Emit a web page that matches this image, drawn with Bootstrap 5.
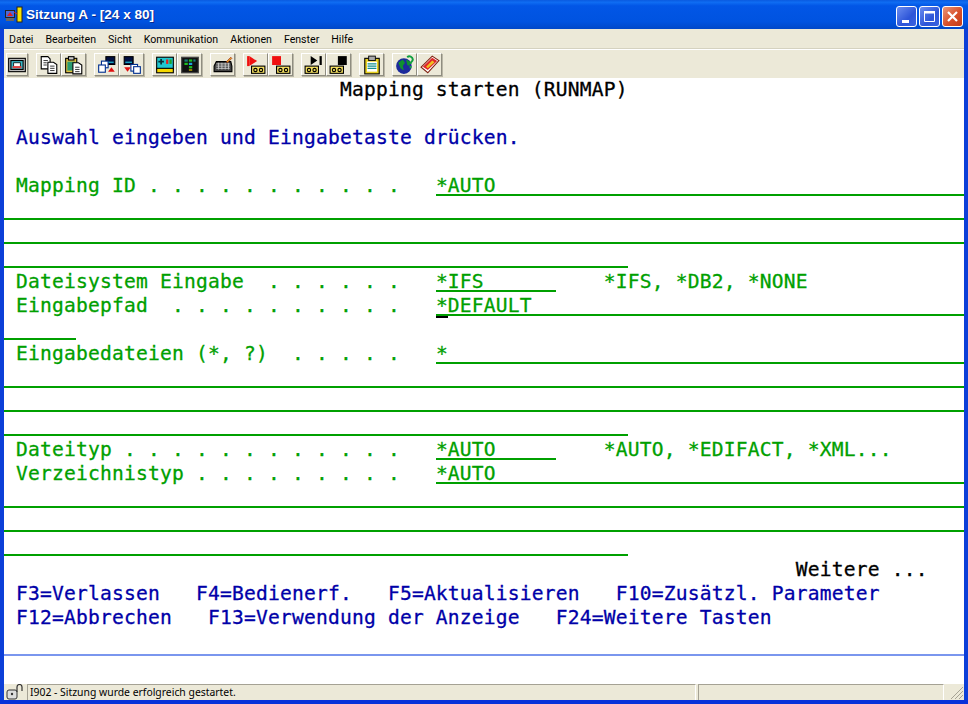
<!DOCTYPE html>
<html lang="de">
<head>
<meta charset="utf-8">
<title>Sitzung A - [24 x 80]</title>
<link href="https://cdn.jsdelivr.net/npm/bootstrap@5.3.0/dist/css/bootstrap.min.css" rel="stylesheet">
<style>
html,body{margin:0;height:704px;overflow:hidden;background:#ece9d8}
.xp-win{width:968px;height:704px;background:#0831d9;border-bottom:4px solid #0831d9;background-clip:padding-box}
.xp-title{height:29px;background:linear-gradient(180deg,#0a5ae0 0,#0f6df2 8%,#0256e6 20%,#0053e0 75%,#0048c8 100%);padding:0 5px 0 5px;color:#fff;font:700 13.600px/1 "Liberation Sans",sans-serif}
.xp-title .ttl{text-shadow:1px 1px 0 #0a2a90;margin-left:3px;margin-top:1px}
.tctl{gap:2px;align-self:flex-end;margin-bottom:2px}
.tbtn{width:21px;height:21px;border:1px solid #fff;border-radius:3px;background:linear-gradient(135deg,#6b8df0,#2d55d8 60%,#3a63e0);display:block}
.tbtn.cl{background:linear-gradient(135deg,#e9967a,#d8502a 55%,#c33c18)}
.xp-frame{flex:1;min-height:0;border-left:4px solid #0c3fd8;border-right:4px solid #0c3fd8;background:#ece9d8}
.xp-menu{height:21px;padding:1px 0 0 5px;background:#ece9d8;border-bottom:1px solid #fff;box-shadow:inset 0 -1px 0 #d5d2c0;font:10.600px/19px Roboto,sans-serif;color:#000}
.xp-menu span{margin-right:12px}
.xp-tools{height:28px;padding:3px 0 0 2px;background:#ece9d8}
.tool{width:25px;height:23px;background:#ece9d8;border:1px solid;border-color:#fff #8f8d80 #8f8d80 #fff;box-shadow:1px 1px 0 #b9b6a6;padding:0;flex:none}
.tool.first{width:22px}
.tool svg{display:block;width:20px;height:20px;margin:0 auto}
.tool-gap{width:8px;flex:none}
.term{height:606px;background:#fff;font:19.6px/24px "DejaVu Sans Mono",monospace;letter-spacing:.2px;position:relative}
.trow{height:24px;white-space:pre;color:#00a000;font-family:"DejaVu Sans Mono",monospace;overflow:hidden;-webkit-text-stroke:.3px currentColor}
.uln{display:inline-block;height:22px;border-bottom:2px solid #00a000;line-height:24px;vertical-align:top}
.c-bk{color:#000}.c-nv{color:#0000a8}
.cursor{position:absolute;left:432px;top:238px;width:12px;height:2px;background:#000}
.sep{height:2px;background:#7a96ee}
.xp-status{height:16px;background:#ece9d8;font:10.400px/15px "Noto Sans",sans-serif;color:#000}
.st-lock{width:23px;flex:none}
.st-msg{width:669px;flex:none;border-left:1px solid #a5a294;border-top:1px solid #a5a294;padding-left:2px;border-right:1px solid #fff}
.st-a{width:2px;flex:none}
.st-b{flex:1;border-top:1px solid #a5a294;border-left:1px solid #a5a294;border-right:1px solid #fff}
.st-c{width:20px;flex:none;overflow:hidden}
</style>
</head>
<body>
<div class="xp-win d-flex flex-column">
  <div class="xp-title d-flex align-items-center">
    <svg width="18" height="18" viewBox="0 0 18 18"><rect x="0" y="4" width="10" height="8" fill="#222"/><rect x="1" y="5" width="8" height="6" fill="#4a6ad8"/><path d="M2 10l3-4 3 4z" fill="#e02020"/><rect x="1" y="12" width="8" height="3" fill="#666"/><rect x="12" y="1" width="5" height="15" fill="#f5e400" stroke="#222"/><path d="M9 6l3 2" stroke="#e02020"/></svg>
    <span class="ttl">Sitzung A - [24 x 80]</span>
    <span class="ms-auto d-flex tctl">
      <span class="tbtn"><svg width="19" height="19" viewBox="0 0 19 19"><rect x="5" y="13" width="7" height="3" fill="#fff"/></svg></span>
      <span class="tbtn"><svg width="19" height="19" viewBox="0 0 19 19"><path d="M4.500 4.500h10v10h-10z" fill="none" stroke="#fff"/><rect x="4" y="4" width="11" height="2.500" fill="#fff"/></svg></span>
      <span class="tbtn cl"><svg width="19" height="19" viewBox="0 0 19 19"><path d="M5 5l9 9M14 5l-9 9" stroke="#fff" stroke-width="2.200"/></svg></span>
    </span>
  </div>
  <div class="xp-frame d-flex flex-column">
    <div class="xp-menu d-flex"><span>Datei</span><span>Bearbeiten</span><span>Sicht</span><span>Kommunikation</span><span>Aktionen</span><span>Fenster</span><span>Hilfe</span></div>
    <div class="xp-tools d-flex">
      <button class="tool first"><svg viewBox="0 0 18 18"><rect x="1.500" y="3" width="15" height="12" fill="#bbb" stroke="#000"/><rect x="3.500" y="5" width="11" height="8" fill="#3ab8c8" stroke="#000"/><rect x="6" y="7" width="6" height="4" fill="#fff" stroke="#000" stroke-width=".7"/><rect x="5" y="10" width="8" height="2" fill="#e04040"/></svg></button>
      <span class="tool-gap"></span>
      <button class="tool"><svg viewBox="0 0 18 18"><path d="M2 1.500h6l2 2v9H2z" fill="#fff" stroke="#000"/><path d="M8 6.500h5l3 2v8H8z" fill="#fff" stroke="#000"/><path d="M4 5h4M4 7h3M4 9h3M10 10h4M10 12h4M10 14h4" stroke="#000" stroke-width=".7"/></svg></button>
      <button class="tool"><svg viewBox="0 0 18 18"><rect x="1.500" y="3" width="10" height="13" fill="#e0c040" stroke="#000"/><rect x="4" y="1.500" width="5" height="3" fill="#ccc" stroke="#000"/><rect x="3" y="6" width="7" height="8" fill="#2a9a70"/><path d="M8 7h5l3 2v8H8z" fill="#fff" stroke="#000"/><path d="M10 11h4M10 13h4M10 15h4" stroke="#000" stroke-width=".7"/></svg></button>
      <span class="tool-gap"></span>
      <button class="tool"><svg viewBox="0 0 18 18"><rect x="8" y="1.500" width="8" height="7" fill="#000f40" stroke="#000"/><rect x="9" y="6" width="6" height="1" fill="#22d0e0"/><rect x="4" y="5.500" width="6" height="6" fill="#fff" stroke="#003090"/><rect x="1.500" y="9" width="6" height="6.500" fill="#fff" stroke="#003090"/><path d="M13 11l3 4h-6z" fill="#e01010"/></svg></button>
      <button class="tool"><svg viewBox="0 0 18 18"><rect x="2" y="1.500" width="8" height="7" fill="#000f40" stroke="#000"/><rect x="3" y="6" width="6" height="1" fill="#22d0e0"/><rect x="8" y="8.500" width="6" height="6" fill="#fff" stroke="#003090"/><rect x="10.500" y="10.500" width="6" height="6" fill="#fff" stroke="#003090"/><path d="M2 11h6l-3 4z" fill="#e01010"/></svg></button>
      <span class="tool-gap"></span>
      <button class="tool"><svg viewBox="0 0 18 18"><rect x="1.500" y="2" width="15" height="11" fill="#20c8d0" stroke="#000"/><path d="M3 6h5M5.500 3.500v5" stroke="#083038" stroke-width="1.500"/><rect x="10" y="4" width="2" height="4" fill="#e02020"/><rect x="13" y="4" width="2" height="4" fill="#20a020"/><rect x="1.500" y="12" width="15" height="4" fill="#f5d800" stroke="#000"/></svg></button>
      <button class="tool"><svg viewBox="0 0 18 18"><rect x="1.500" y="2" width="15" height="14" fill="#111" stroke="#444"/><rect x="4" y="4" width="3" height="2" fill="#1a7a7a"/><rect x="8" y="4" width="3" height="2" fill="#20c020"/><rect x="12" y="4" width="2" height="2" fill="#1a7a7a"/><rect x="4" y="7" width="3" height="2" fill="#20c020"/><rect x="8" y="7" width="3" height="2" fill="#20a0e0"/><rect x="8" y="10" width="3" height="2" fill="#20c020"/><rect x="8" y="13" width="3" height="1" fill="#f0d000"/></svg></button>
      <span class="tool-gap"></span>
      <button class="tool"><svg viewBox="0 0 18 18"><path d="M1 10l2-4h13l1 4v5H1z" fill="#444" stroke="#000"/><path d="M3 8h12M3 10h12M3 12h12M5 7v6M8 7v6M11 7v6M14 7v6" stroke="#ccc" stroke-width=".8"/><path d="M12 6l4-4 1 1-4 4z" fill="#e0a020" stroke="#a02010" stroke-width=".6"/></svg></button>
      <span class="tool-gap"></span>
      <button class="tool"><svg viewBox="0 0 18 18"><path d="M3 1v9l7-4.500z" fill="#f01010"/><rect x="1" y="1" width="2" height="9" fill="#f01010"/><rect x="5" y="10" width="12" height="6.500" fill="#f5e060" stroke="#000"/><circle cx="8.500" cy="13.500" r="1.500" fill="none" stroke="#000"/><circle cx="13.500" cy="13.500" r="1.500" fill="none" stroke="#000"/></svg></button>
      <button class="tool"><svg viewBox="0 0 18 18"><rect x="1" y="1" width="8" height="8" fill="#f01010"/><rect x="5" y="10" width="12" height="6.500" fill="#f5e060" stroke="#000"/><circle cx="8.500" cy="13.500" r="1.500" fill="none" stroke="#000"/><circle cx="13.500" cy="13.500" r="1.500" fill="none" stroke="#000"/></svg></button>
      <span class="tool-gap"></span>
      <button class="tool"><svg viewBox="0 0 18 18"><path d="M6 1v8l6-4z" fill="#000"/><rect x="14" y="1" width="2" height="8" fill="#000"/><rect x="1" y="10" width="12" height="6.500" fill="#f5e060" stroke="#000"/><circle cx="4.500" cy="13.500" r="1.500" fill="none" stroke="#000"/><circle cx="9.500" cy="13.500" r="1.500" fill="none" stroke="#000"/></svg></button>
      <button class="tool"><svg viewBox="0 0 18 18"><rect x="8" y="1" width="8" height="8" fill="#000"/><rect x="1" y="10" width="12" height="6.500" fill="#f5e060" stroke="#000"/><circle cx="4.500" cy="13.500" r="1.500" fill="none" stroke="#000"/><circle cx="9.500" cy="13.500" r="1.500" fill="none" stroke="#000"/></svg></button>
      <span class="tool-gap"></span>
      <button class="tool"><svg viewBox="0 0 18 18"><rect x="2.500" y="3" width="13" height="14" fill="#e8d020" stroke="#000"/><rect x="6" y="1" width="6" height="4" fill="#aaa" stroke="#000" stroke-width=".8"/><rect x="4.500" y="6" width="9" height="9" fill="#fff"/><path d="M5 8h8M5 10h8M5 12h8" stroke="#109090"/></svg></button>
      <span class="tool-gap"></span>
      <button class="tool"><svg viewBox="0 0 18 18"><circle cx="8" cy="10" r="7" fill="#1c2a9c"/><path d="M3 7l4-3 2 3-2 3 1 4-3-2zM10 4l4 2-1 4-2-1z" fill="#109030"/><path d="M11 2a3 3 0 0 1 5 2c0 2-2 2-2 4M14 10v2" stroke="#10a040" stroke-width="1.800" fill="none"/></svg></button>
      <button class="tool"><svg viewBox="0 0 18 18"><path d="M1 11L11 1l6 4L7 16z" fill="#fff" stroke="#802010"/><path d="M2.500 10.500L11 2.500l4.500 3L7 13.500z" fill="#e02828"/><path d="M5.500 10.500L11 5l2 1.500-6 5.500z" fill="#f0c020"/></svg></button>
    </div>
    <div class="term">
      <div class="trow c-bk">                            Mapping starten (RUNMAP)</div>
      <div class="trow"></div>
      <div class="trow c-nv"> Auswahl eingeben und Eingabetaste drücken.</div>
      <div class="trow"></div>
      <div class="trow"> Mapping ID . . . . . . . . . . .   <span class="uln">*AUTO                                       </span></div>
      <div class="trow"><span class="uln">                                                                                </span></div>
      <div class="trow"><span class="uln">                                                                                </span></div>
      <div class="trow"><span class="uln">                                                    </span></div>
      <div class="trow"> Dateisystem Eingabe  . . . . . .   <span class="uln">*IFS      </span>    *IFS, *DB2, *NONE</div>
      <div class="trow"> Eingabepfad  . . . . . . . . . .   <span class="uln">*DEFAULT                                    </span></div>
      <div class="trow"><span class="uln">      </span></div>
      <div class="trow"> Eingabedateien (*, ?)  . . . . .   <span class="uln">*                                           </span></div>
      <div class="trow"><span class="uln">                                                                                </span></div>
      <div class="trow"><span class="uln">                                                                                </span></div>
      <div class="trow"><span class="uln">                                                    </span></div>
      <div class="trow"> Dateityp . . . . . . . . . . . .   <span class="uln">*AUTO     </span>    *AUTO, *EDIFACT, *XML...</div>
      <div class="trow"> Verzeichnistyp . . . . . . . . .   <span class="uln">*AUTO                                       </span></div>
      <div class="trow"><span class="uln">                                                                                </span></div>
      <div class="trow"><span class="uln">                                                                                </span></div>
      <div class="trow"><span class="uln">                                                    </span></div>
      <div class="trow c-bk">                                                                  Weitere ...</div>
      <div class="trow c-nv"> F3=Verlassen   F4=Bedienerf.   F5=Aktualisieren   F10=Zusätzl. Parameter</div>
      <div class="trow c-nv"> F12=Abbrechen   F13=Verwendung der Anzeige   F24=Weitere Tasten</div>
      <div class="trow"></div>
      <div class="sep"></div>
      <span class="cursor"></span>
    </div>
    <div class="xp-status d-flex">
      <div class="st-lock"><svg width="22" height="16" viewBox="0 0 22 16"><rect x="3" y="6" width="10" height="9" rx="2" fill="#ddd" stroke="#333"/><path d="M13 8V3a2.500 2.500 0 0 1 5 0v4" fill="none" stroke="#333" stroke-width="1.200"/><circle cx="8" cy="10" r="1.200" fill="#333"/></svg></div>
      <div class="st-msg">I902 - Sitzung wurde erfolgreich gestartet.</div>
      <div class="st-a"></div>
      <div class="st-b"></div>
      <div class="st-c"><svg width="20" height="16" viewBox="0 0 20 16"><path d="M7 15L19 3M11 15l8-8M15 15l4-4" stroke="#a5a294"/></svg></div>
    </div>
  </div>
</div>
</body>
</html>
